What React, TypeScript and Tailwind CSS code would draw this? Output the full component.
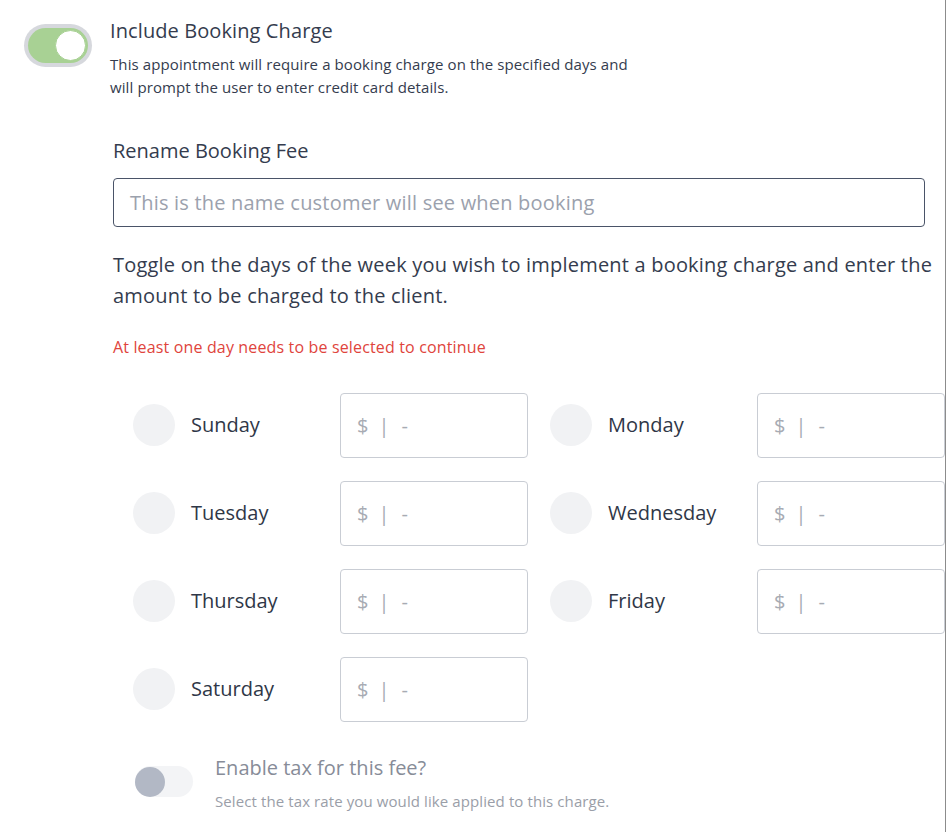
import React from "react";

const days: [string, string | null][] = [
  ["Sunday", "Monday"],
  ["Tuesday", "Wednesday"],
  ["Thursday", "Friday"],
  ["Saturday", null],
];

function DayCell({ name }: { name: string }) {
  return (
    <div className="flex items-center h-[64px]">
      <div className="w-[42px] h-[42px] rounded-full bg-[#f1f2f4] shrink-0" />
      <div className="ml-[16px] w-[149px] text-[20px] text-[#2f3747] leading-none">{name}</div>
      <div className="w-[188px] h-[65px] border border-[#c9cdd4] rounded-[4px] flex items-center pl-[16px] pt-[1px] text-[20px] text-[#a7abb3]">
        <span>$</span>
        <span className="ml-[10px]">|</span>
        <span className="ml-[12px]">-</span>
      </div>
    </div>
  );
}

export default function App() {
  return (
    <div
      className="w-[946px] h-[832px] bg-white overflow-hidden"
      style={{ fontFamily: "'Open Sans', 'Noto Sans', sans-serif" }}
    >
      <div className="w-[946px] h-[832px] border-r border-[#8c8c8c] relative">
        {/* header toggle */}
        <div className="flex pt-[20px]">
          <div className="ml-[24px] mt-[4px] w-[68px] h-[43px] rounded-full bg-[#d6d8dd] p-[4px] shrink-0">
            <div className="w-full h-full rounded-full bg-[#a8d194] flex items-center justify-end pr-[2px]">
              <div className="w-[31px] h-[31px] rounded-full bg-white border border-[#a8d194]" />
            </div>
          </div>
          <div className="ml-[18px]">
            <div className="text-[20px] text-[#343c4e] leading-[22px] tracking-[0.1px]">Include Booking Charge</div>
            <div className="mt-[11px] text-[15px] text-[#343c4e] leading-[23px] tracking-[0.1px]">
              This appointment will require a booking charge on the specified days and
              <br />
              will prompt the user to enter credit card details.
            </div>
          </div>
        </div>

        <div className="ml-[113px]">
          <div className="mt-[38px] text-[20px] text-[#343c4e] leading-[28px]">Rename Booking Fee</div>
          <div className="mt-[13px] w-[812px] h-[49px] border border-[#4a5468] rounded-[4px] flex items-center pl-[16px] text-[20px] text-[#9ba1ad] tracking-[0.2px]">
            This is the name customer will see when booking
          </div>
          <div className="mt-[22px] text-[20px] text-[#343c4e] leading-[31px] tracking-[0.2px] whitespace-nowrap">
            Toggle on the days of the week you wish to implement a booking charge and enter the
            <br />
            amount to be charged to the client.
          </div>
          <div className="mt-[26px] text-[16px] text-[#e0443c] leading-[20px] tracking-[0.15px]">
            At least one day needs to be selected to continue
          </div>
        </div>

        <div className="ml-[133px] mt-[36px] grid grid-cols-[395px_395px] gap-x-[22px] gap-y-[24px]">
          {days.map(([a, b]) => (
            <React.Fragment key={a}>
              <DayCell name={a} />
              {b ? <DayCell name={b} /> : <div />}
            </React.Fragment>
          ))}
        </div>

        <div className="flex ml-[135px] mt-[33px]">
          <div className="mt-[12px] w-[58px] h-[31px] rounded-full bg-[#f3f4f6] flex items-center shrink-0">
            <div className="w-[30px] h-[30px] rounded-full bg-[#b2b8c5]" />
          </div>
          <div className="ml-[22px]">
            <div className="text-[20px] text-[#878c98] leading-[28px]">Enable tax for this fee?</div>
            <div className="mt-[9px] text-[15px] text-[#9a9ea8] leading-[20px] tracking-[0.1px]">
              Select the tax rate you would like applied to this charge.
            </div>
          </div>
        </div>
      </div>
    </div>
  );
}
